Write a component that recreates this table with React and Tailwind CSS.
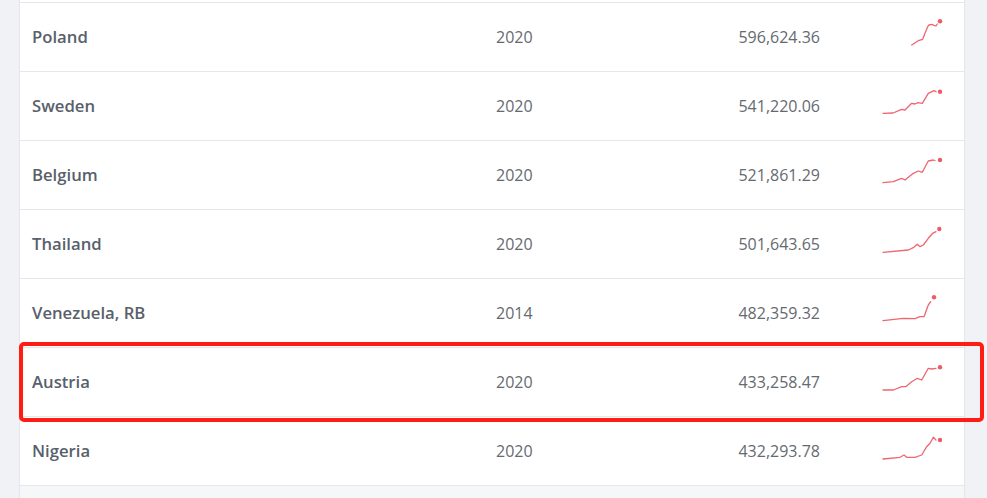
import React from 'react';

const ROWS = [
  {
    name: 'Poland', year: '2020', value: '596,624.36',
    points: '31.7,42 38.3,37.7 42.7,36.3 45,30.3 47.7,23.7 49,22 51.7,21.3 54,22.3 56,23 57.3,21',
    dot: [60, 18.3],
  },
  {
    name: 'Sweden', year: '2020', value: '541,220.06',
    points: '3,41.3 13,41 21.7,37.3 25,38 31.7,31.3 35,32 38,30.7 42.3,31.3 48.3,21.3 54,18.7 56,19.7',
    dot: [60, 19.7],
  },
  {
    name: 'Belgium', year: '2020', value: '521,861.29',
    points: '3,41.7 13.3,40.7 21.7,37.3 25,39 33.3,32.3 38.3,30 42.3,31.3 48.3,20 53.3,19 55,19.5',
    dot: [60, 19],
  },
  {
    name: 'Thailand', year: '2020', value: '501,643.65',
    points: '3,42.3 28.3,40 33.3,37.7 37.3,34.3 40,36.7 43.3,35 48.3,28.3 52.7,23.3 56,21.7',
    dot: [59.3, 19],
  },
  {
    name: 'Venezuela, RB', year: '2014', value: '482,359.32',
    points: '3,41.7 23.3,39.3 35,39.7 40,37.7 44,37.7 48.3,26 50.7,22.7',
    dot: [54, 18.3],
  },
  {
    name: 'Austria', year: '2020', value: '433,258.47',
    points: '3,42 13.3,42 21.7,38.7 25.7,38.7 31.7,33.7 37.3,30.3 41.7,32 48.3,20.3 51.7,21 56,20.3',
    dot: [60, 19.3],
  },
  {
    name: 'Nigeria', year: '2020', value: '432,293.78',
    points: '3,42 20,40.3 24,38 26.7,40.3 35,40.3 41.7,38 46.7,29.7 50,26.3 53.3,20.3 56,23',
    dot: [60, 23],
  },
];

function Sparkline({ points, dot }) {
  return (
    <svg width="64" height="68" viewBox="0 0 64 68" className="shrink-0">
      <polyline
        points={points}
        fill="none"
        stroke="#ef6571"
        strokeWidth="1.3"
        strokeLinejoin="round"
        strokeLinecap="round"
      />
      <circle cx={dot[0]} cy={dot[1]} r="2.2" fill="#ef5a67" />
    </svg>
  );
}

export default function App() {
  return (
    <div className="h-[498px] overflow-hidden bg-[#f0f2f5] pl-[19px]" style={{ fontFamily: '"Open Sans", sans-serif' }}>
      <div className="relative w-[946px] border-x border-[#e3e6ea] bg-white">
        <div className="h-[3px] border-b border-[#e5e7ea]" />
        {ROWS.map(row => (
          <div key={row.name} className="flex h-[69px] items-center border-b border-[#e5e7ea] pl-[12px]">
            <div className="w-[464px] text-[16.7px] font-semibold text-[#58606b]">{row.name}</div>
            <div className="w-[200px] text-[16px] text-[#666a70]">{row.year}</div>
            <div className="w-[124px] text-right text-[16px] text-[#666a70]">{row.value}</div>
            <div className="ml-[60px]">
              <Sparkline points={row.points} dot={row.dot} />
            </div>
          </div>
        ))}
        <div className="h-[20px] bg-[#f6f7f9]" />

        {/* annotation box around Austria */}
        <div className="pointer-events-none absolute left-[-1px] top-[342px] h-[80px] w-[965px] rounded-[5px] border-4 border-[#ff1c14]" />
      </div>
    </div>
  );
}
